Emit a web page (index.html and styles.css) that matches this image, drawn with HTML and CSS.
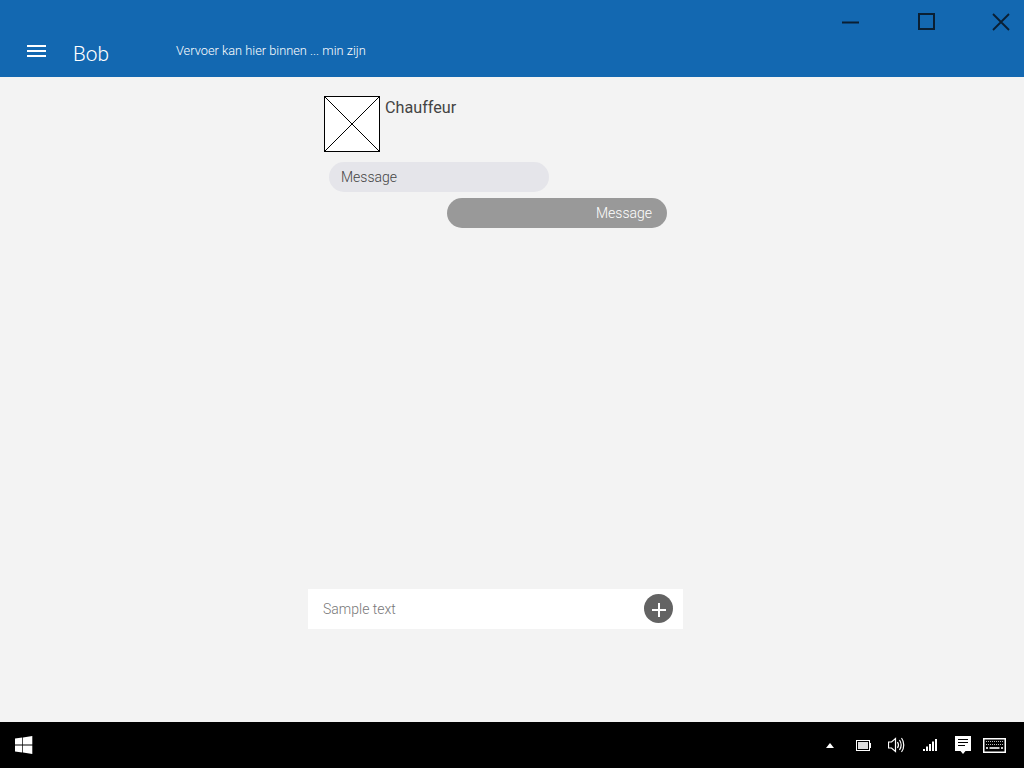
FILE: index.html
```html
<!DOCTYPE html>
<html lang="en">
<head>
  <meta charset="UTF-8">
  <title>Bob</title>
  <link rel="stylesheet" href="styles.css">
</head>
<body>
<div class="app">
  <header class="header">
    <div class="caption">
      <svg class="caption-btn" width="18" height="18" viewBox="0 0 18 18"><path d="M0 9.5H17" stroke="#0a1f33" stroke-width="2"/></svg>
      <svg class="caption-btn" width="18" height="18" viewBox="0 0 18 18"><rect x="2" y="1" width="15" height="15" fill="none" stroke="#0a1f33" stroke-width="2"/></svg>
      <svg class="caption-btn" width="18" height="18" viewBox="0 0 18 18"><path d="M1 1L17 17M17 1L1 17" stroke="#0a1f33" stroke-width="1.8"/></svg>
    </div>
    <div class="titlebar">
      <svg class="menu-icon" width="19" height="14" viewBox="0 0 19 14"><path d="M0 1H19M0 6H19M0 11H19" stroke="#fff" stroke-width="2"/></svg>
      <span class="title">Bob</span>
      <span class="subtitle">Vervoer kan hier binnen ... min zijn</span>
    </div>
  </header>

  <main class="main">
    <div class="chat">
      <div class="messages">
        <div class="sender">
          <svg class="avatar" width="56" height="56" viewBox="0 0 56 56">
            <rect x="0.5" y="0.5" width="55" height="55" fill="#fff" stroke="#000"/>
            <path d="M0.5 0.5L55.5 55.5M55.5 0.5L0.5 55.5" stroke="#000"/>
          </svg>
          <span class="sender-name">Chauffeur</span>
        </div>
        <div class="bubble bubble-in">Message</div>
        <div class="bubble bubble-out">Message</div>
      </div>
      <div class="composer">
        <span class="placeholder">Sample text</span>
        <svg class="add-btn" width="29" height="29" viewBox="0 0 29 29">
          <circle cx="14.5" cy="14.5" r="14.5" fill="#636363"/>
          <path d="M8 16H22M15 9V23" stroke="#fff" stroke-width="2"/>
        </svg>
      </div>
    </div>
  </main>

  <footer class="taskbar">
    <svg width="18" height="18" viewBox="0 0 18 18"><path d="M0 2.600L7.300 1.500V8.600H0ZM8 1.400L17.300 0V8.600H8ZM0 9.400H7.300V16.500L0 15.400ZM8 9.400H17.300V18L8 16.600Z" fill="#fff"/></svg>
    <div class="tray">
      <svg class="tray-arrow" width="8" height="5" viewBox="0 0 8 5"><path d="M4 0L8 5H0Z" fill="#fff"/></svg>
      <svg class="tray-battery" width="15" height="11" viewBox="0 0 15 11">
        <rect x="0.500" y="0.500" width="13" height="10" fill="none" stroke="#fff"/>
        <rect x="2" y="2" width="10" height="7" fill="#ddd"/>
        <rect x="14" y="3" width="1" height="5" fill="#fff"/>
      </svg>
      <svg class="tray-sound" width="17" height="16" viewBox="0 0 17 16">
        <path d="M0.500 5H3.500L7.500 1.500V14.500L3.500 11H0.500Z" fill="none" stroke="#fff" stroke-width="1.200"/>
        <path d="M9.500 5C10.800 7 10.800 9 9.500 11M11.500 3C13.500 6 13.500 10 11.500 13M13.500 1C16.500 5 16.500 11 13.500 15" fill="none" stroke="#fff" stroke-width="1.200"/>
      </svg>
      <svg class="tray-signal" width="14" height="12" viewBox="0 0 14 12"><path d="M0 10h2v2H0ZM3 7.500h2V12H3ZM6 5h2v7H6ZM9 2.500h2V12H9ZM12 0h2v12h-2Z" fill="#fff"/></svg>
      <svg class="tray-note" width="16" height="18" viewBox="0 0 16 18">
        <path d="M0 0H16V15H10.500L8 18L5.500 15H0Z" fill="#fff"/>
        <path d="M3 3.500H13M3 6.500H13M3 9.500H10" stroke="#000"/>
      </svg>
      <svg class="tray-keyboard" width="23" height="15" viewBox="0 0 23 15">
        <rect x="0.750" y="0.750" width="21.500" height="13.500" fill="none" stroke="#fff" stroke-width="1.500"/>
        <path d="M3 3.500H20M3 6.500H20" stroke="#bbb" stroke-dasharray="1 1"/>
        <path d="M3 10H5M6.500 10H16.500M18 10H20" stroke="#ccc" stroke-width="2"/>
      </svg>
    </div>
  </footer>
</div>
</body>
</html>
```

FILE: styles.css
```css
* {
  padding: 0;
  margin: 0;
  box-sizing: border-box;
}

body {
  font-family: Roboto, "Liberation Sans", sans-serif;
  background: #f3f3f3;
}

.app {
  display: flex;
  flex-direction: column;
  height: 768px;
  overflow: hidden;
}

.header {
  height: 77px;
  background: #1368b1;
  color: #fff;
  display: flex;
  flex-direction: column;
}

.caption {
  display: flex;
  justify-content: flex-end;
  gap: 57px;
  padding: 13px 14px 0 0;
  height: 34px;
}

.titlebar {
  display: flex;
  align-items: center;
  padding-left: 27px;
  height: 34px;
}

.menu-icon {
  margin: 2px 27px 0 0;
}

.title {
  width: 103px;
  margin-top: 6px;
  font-size: 20.8px;
  font-weight: 300;
}

.subtitle {
  margin-bottom: 2px;
  font-size: 12.8px;
  font-weight: 300;
}

.main {
  flex: 1;
  display: flex;
  padding-left: 308px;
}

.chat {
  width: 375px;
  height: 552px;
  display: flex;
  flex-direction: column;
  justify-content: space-between;
  padding-top: 19px;
}

.messages {
  display: flex;
  flex-direction: column;
  padding-left: 16px;
}

.sender {
  display: flex;
  gap: 5px;
  margin-bottom: 10px;
}

.sender-name {
  font-size: 16.2px;
  color: #444;
  line-height: 24px;
}

.bubble {
  width: 220px;
  height: 30px;
  border-radius: 15px;
  font-size: 14px;
  font-weight: 300;
  line-height: 30px;
}

.bubble-in {
  margin-left: 5px;
  padding-left: 12px;
  background: #e5e5ea;
  color: #444;
}

.bubble-out {
  margin: 6px 0 0 123px;
  padding-right: 15px;
  background: #999;
  color: #fff;
  text-align: right;
}

.composer {
  height: 40px;
  background: #fff;
  display: flex;
  align-items: center;
  justify-content: space-between;
  padding: 0 10px 0 15px;
}

.placeholder {
  font-size: 14px;
  font-weight: 300;
  color: #777;
}

.add-btn {
  margin-bottom: 1px;
}

.taskbar {
  height: 46px;
  background: #000;
  display: flex;
  align-items: center;
  justify-content: space-between;
  padding: 0 18px 0 15px;
}

.tray {
  display: flex;
  align-items: center;
}

.tray-battery {
  margin-left: 22px;
}

.tray-sound {
  margin-left: 17px;
}

.tray-signal {
  margin-left: 18px;
}

.tray-note {
  margin-left: 18px;
}

.tray-keyboard {
  margin-left: 12px;
}
```
